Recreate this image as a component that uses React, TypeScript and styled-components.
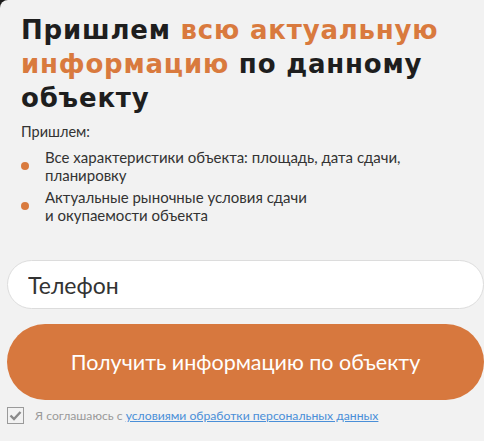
import React from "react";
import styled, { createGlobalStyle } from "styled-components";

const GlobalStyle = createGlobalStyle`
  html, body {
    margin: 0;
    padding: 0;
    background: #1c1c1c;
  }
  * {
    box-sizing: border-box;
  }
`;

const Panel = styled.div`
  width: 484px;
  height: 441px;
  background: #f2f2f2;
  border-top-left-radius: 8px;
  overflow: hidden;
  padding: 13px 0 0 7px;
  font-family: "Lato", "Noto Sans", sans-serif;
`;

const Title = styled.h2`
  margin: 0 0 0 14px;
  font-family: "DejaVu Sans", sans-serif;
  font-weight: 700;
  font-size: 26px;
  line-height: 34px;
  letter-spacing: 0.8px;
  color: #1e1e1e;
`;

const Accent = styled.span`
  color: #d97a3e;
`;

const Lead = styled.p`
  margin: 8px 0 8px 14px;
  font-size: 14.5px;
  color: #333;
`;

const List = styled.ul`
  list-style: none;
  margin: 0 0 0 14px;
  padding: 0;
  display: flex;
  flex-direction: column;
  gap: 4px;
`;

const Item = styled.li`
  display: flex;
  align-items: center;
  gap: 16px;
  font-size: 15px;
  line-height: 18px;
  color: #333;
`;

const Dot = styled.span`
  flex: none;
  width: 8px;
  height: 8px;
  border-radius: 50%;
  background: #d97a3e;
`;

const PhoneInput = styled.input`
  display: block;
  margin-top: 36px;
  width: 477px;
  height: 49px;
  padding: 0 20px;
  border: 1px solid #dcdcdc;
  border-radius: 25px;
  background: #fff;
  font-family: "Lato", "Noto Sans", sans-serif;
  font-size: 23px;
  color: #333;
  outline: none;
  &::placeholder {
    color: #333;
  }
`;

const Submit = styled.button`
  display: block;
  margin-top: 15px;
  width: 477px;
  height: 76px;
  border: none;
  border-radius: 38px;
  background: #d7783e;
  color: #fff;
  font-family: "Lato", "Noto Sans", sans-serif;
  font-size: 21.5px;
  cursor: pointer;
`;

const Consent = styled.label`
  display: flex;
  align-items: center;
  gap: 11px;
  margin-top: 7px;
  font-size: 12.2px;
  color: #9a9a9a;
`;

const Box = styled.span`
  flex: none;
  width: 17px;
  height: 17px;
  border: 1px solid #9a9a9a;
  display: flex;
  align-items: center;
  justify-content: center;
`;

const Link = styled.a`
  color: #4a8fd8;
  text-decoration: underline;
`;

const Check = () => (
  <svg width="13" height="11" viewBox="0 0 13 11">
    <path d="M1.5 5.5l3.5 3.5 6.5-7" fill="none" stroke="#8a8a8a" strokeWidth="2.4" />
  </svg>
);

export default function App() {
  return (
    <>
      <GlobalStyle />
      <Panel>
        <Title>
          Пришлем <Accent>всю актуальную информацию</Accent> по данному объекту
        </Title>
        <Lead>Пришлем:</Lead>
        <List>
          <Item>
            <Dot />
            <span>
              Все характеристики объекта: площадь, дата сдачи,
              <br />
              планировку
            </span>
          </Item>
          <Item>
            <Dot />
            <span>
              Актуальные рыночные условия сдачи
              <br />и окупаемости объекта
            </span>
          </Item>
        </List>
        <PhoneInput placeholder="Телефон" />
        <Submit>Получить информацию по объекту</Submit>
        <Consent>
          <Box>
            <Check />
          </Box>
          <span>
            Я соглашаюсь с <Link href="#">условиями обработки персональных данных</Link>
          </span>
        </Consent>
      </Panel>
    </>
  );
}
